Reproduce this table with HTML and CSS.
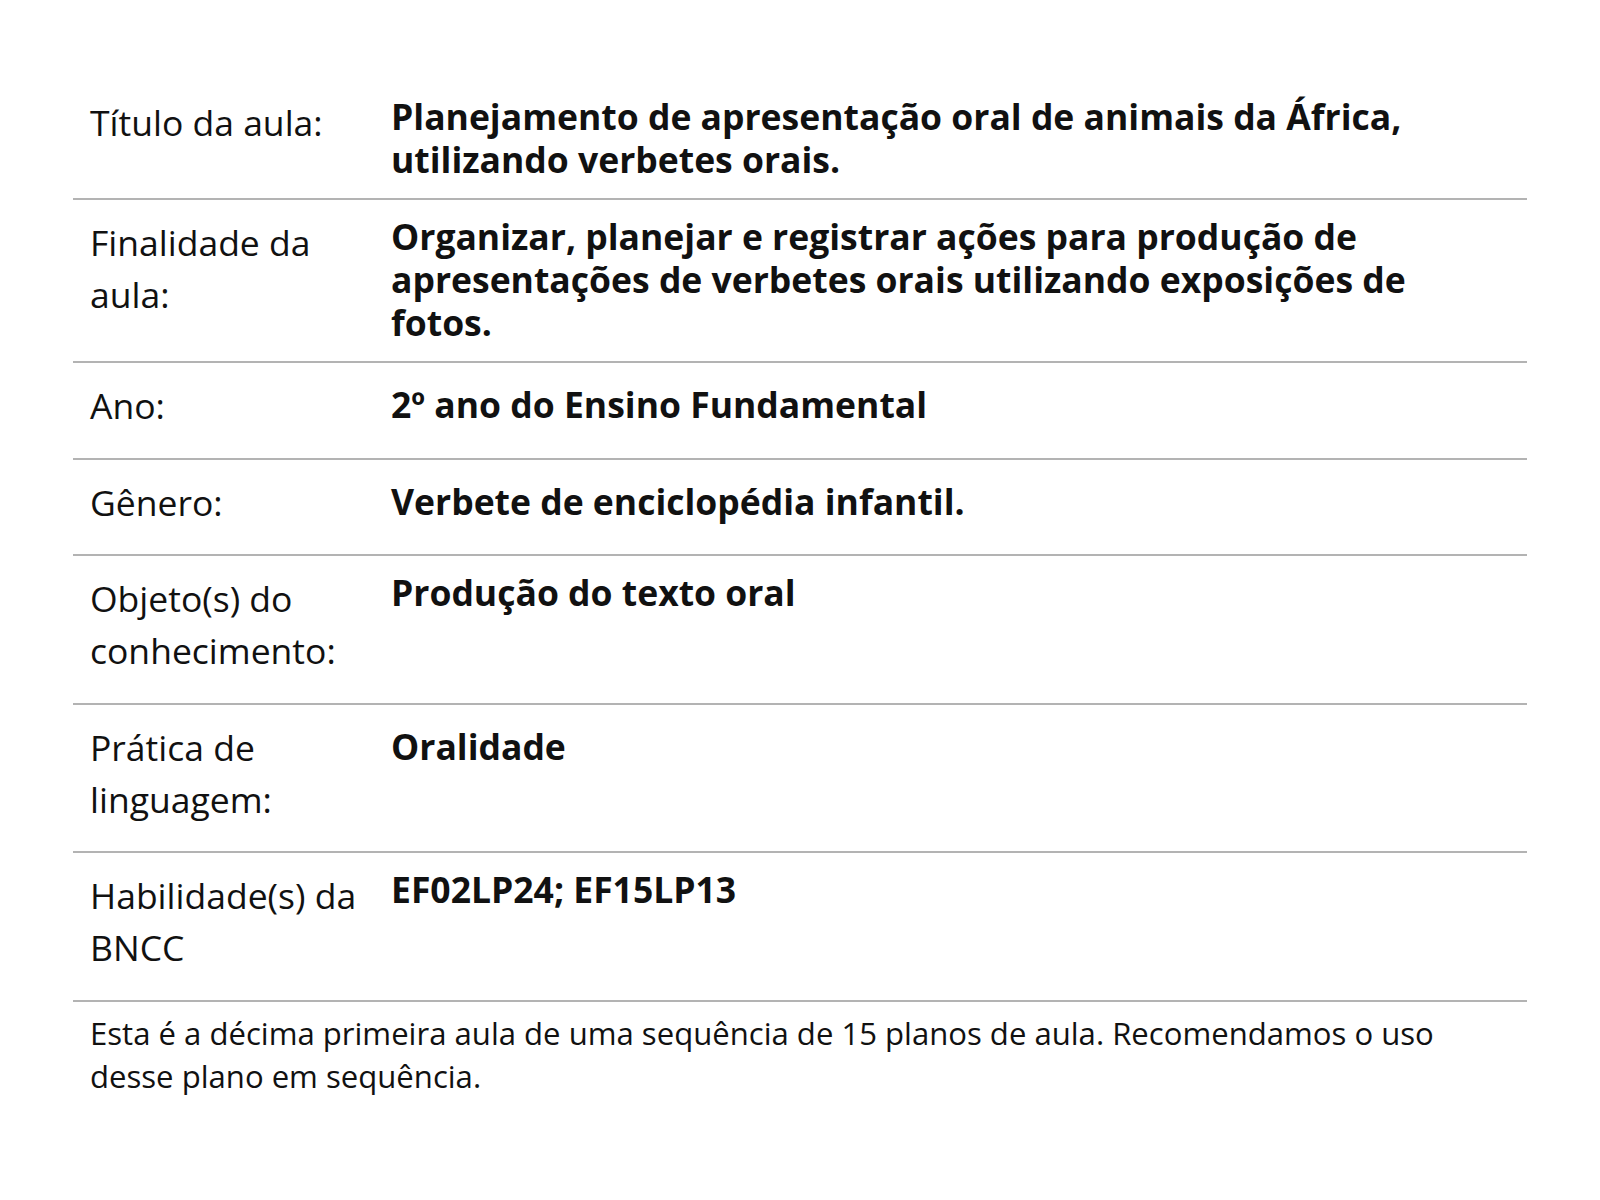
FILE: index.html
```html
<!DOCTYPE html>
<html lang="pt-BR">
<head>
    <meta charset="UTF-8">
    <meta name="viewport" content="width=device-width, initial-scale=1.0">
    <title>Plano de aula</title>
    <link rel="stylesheet" href="styles.css">
</head>
<body>
    <div class="lesson">
        <div class="row">
            <div class="label">Título da aula:</div>
            <div class="value">Planejamento de apresentação oral de animais da África, utilizando verbetes orais.</div>
        </div>
        <div class="row">
            <div class="label">Finalidade da aula:</div>
            <div class="value">Organizar, planejar e registrar ações para produção de apresentações de verbetes orais utilizando exposições de fotos.</div>
        </div>
        <div class="row">
            <div class="label">Ano:</div>
            <div class="value inline">2º ano do Ensino Fundamental</div>
        </div>
        <div class="row">
            <div class="label">Gênero:</div>
            <div class="value inline">Verbete de enciclopédia infantil.</div>
        </div>
        <div class="row">
            <div class="label">Objeto(s) do conhecimento:</div>
            <div class="value">Produção do texto oral</div>
        </div>
        <div class="row">
            <div class="label">Prática de linguagem:</div>
            <div class="value inline">Oralidade</div>
        </div>
        <div class="row">
            <div class="label">Habilidade(s) da BNCC</div>
            <div class="value">EF02LP24; EF15LP13</div>
        </div>
        <p class="note">Esta é a décima primeira aula de uma sequência de 15 planos de aula. Recomendamos o uso desse plano em sequência.</p>
    </div>
</body>
</html>
```

FILE: styles.css
```css
body, html {
    margin: 0;
    padding: 0;
    background-color: #fff;
    font-family: "Open Sans", sans-serif;
    color: #111;
}
.lesson {
    width: 1454px;
    margin: 80px auto 0;
}
.row {
    display: grid;
    grid-template-columns: 301px 1fr;
    padding: 0 17px;
    border-bottom: 2px solid #b3b3b3;
}
.label {
    padding: 16px 8px 26.5px 0;
    font-size: 35.5px;
    line-height: 52px;
}
.value {
    padding: 15px 60px 17px 0;
    font-size: 35.5px;
    line-height: 43px;
    font-weight: bold;
}
.value.inline {
    padding-top: 20px;
}
.note {
    margin: 0;
    padding: 10px 60px 12px 17px;
    font-size: 31.1px;
    line-height: 43px;
}
```
